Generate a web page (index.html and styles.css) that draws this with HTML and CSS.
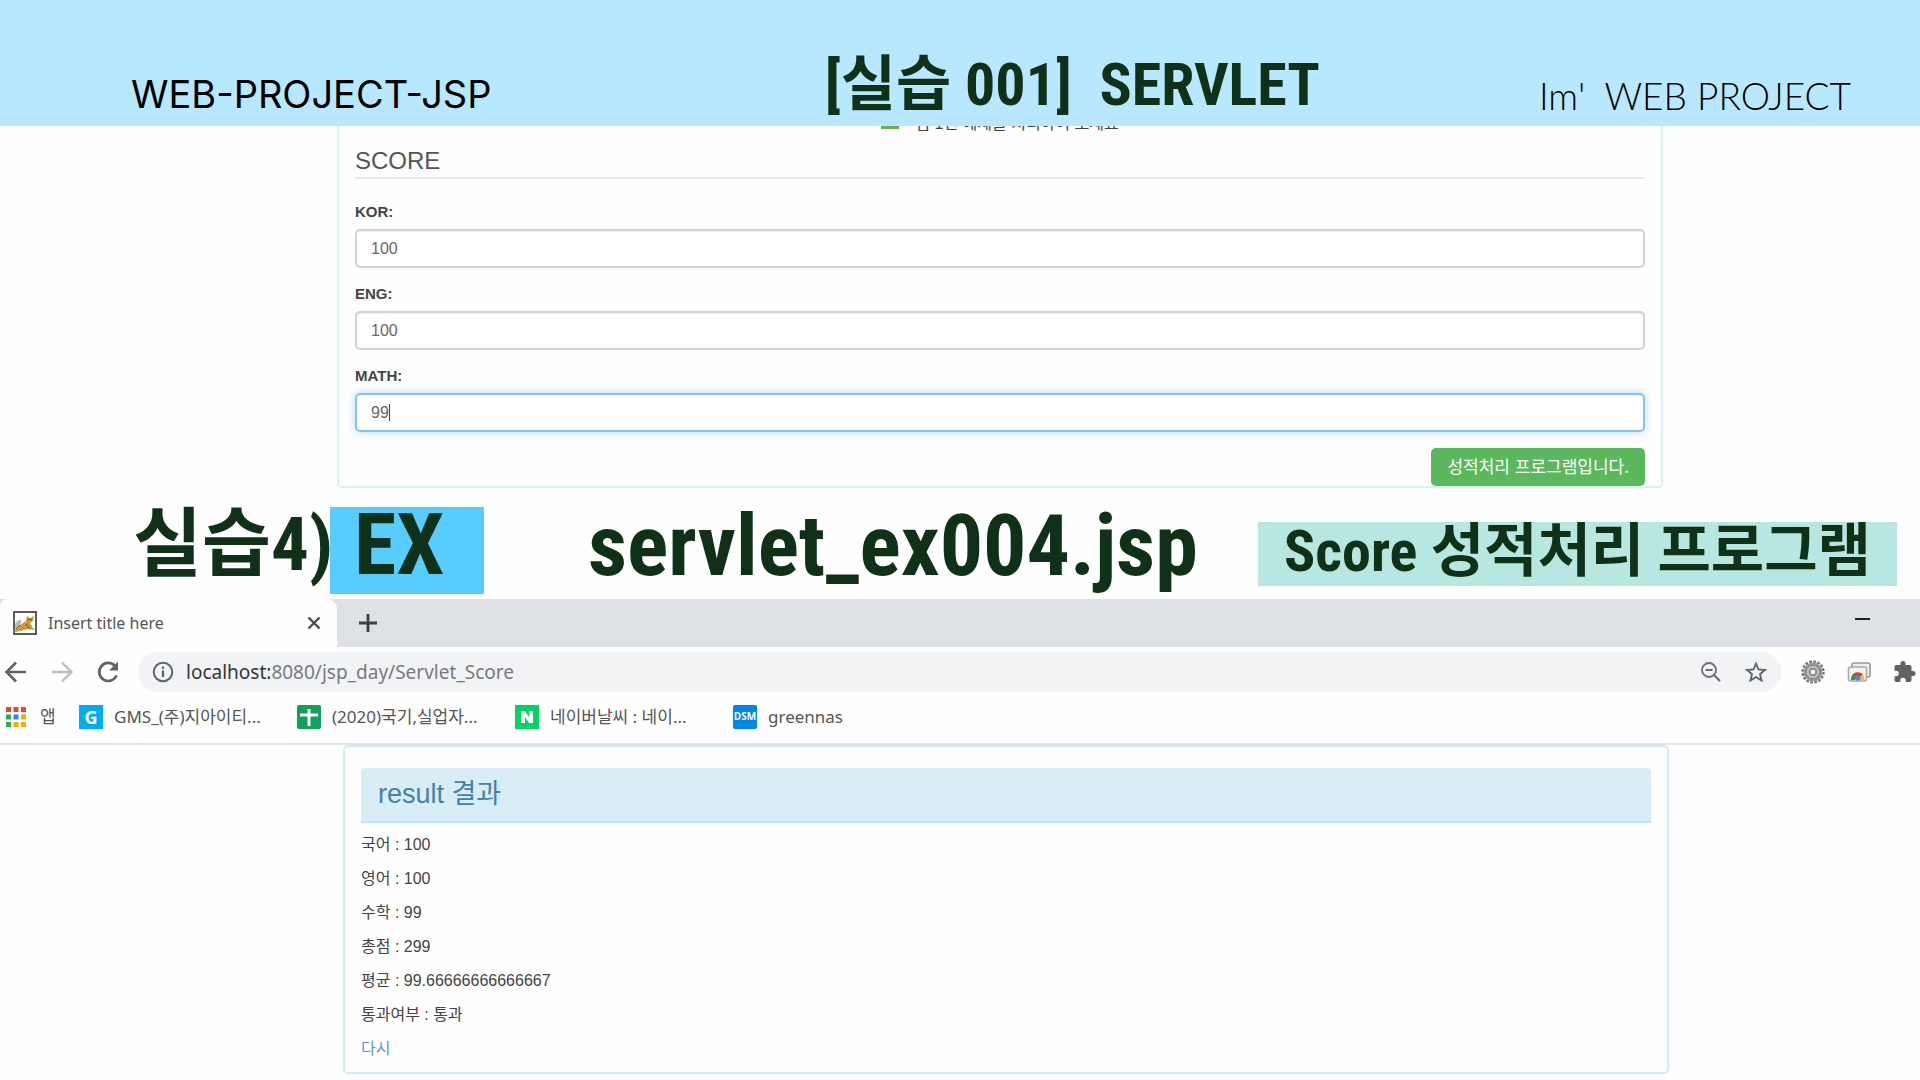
FILE: index.html
```html
<!DOCTYPE html>
<html lang="ko">
<head>
<meta charset="utf-8">
<title>[실습 001] SERVLET</title>
<link rel="stylesheet" href="styles.css">
</head>
<body>
<header class="banner">
  <div class="banner-left">WEB-PROJECT-JSP</div>
  <h1 class="banner-title">[실습 001]&nbsp; SERVLET</h1>
  <div class="banner-right">Im'&nbsp; WEB PROJECT</div>
</header>

<main>
<section class="score-panel">
  <div class="intro"><span class="intro-icon"></span><span>점 1번 예제를 처리하여 보세요</span></div>
  <form class="score-form">
    <h2 class="legend">SCORE</h2>
    <label class="label" for="kor">KOR:</label>
    <input class="field" id="kor" type="text" value="100">
    <label class="label" for="eng">ENG:</label>
    <input class="field" id="eng" type="text" value="100">
    <label class="label" for="math">MATH:</label>
    <div class="field field-active"><input class="bare" id="math" type="text" value="99"><span class="caret"></span></div>
    <button class="submit" type="button">성적처리 프로그램입니다.</button>
  </form>
</section>

<section class="caption">
  <h2 class="caption-num">실습4)</h2>
  <div class="caption-ex">EX</div>
  <div class="caption-file">servlet_ex004.jsp</div>
  <div class="caption-desc">Score 성적처리 프로그램</div>
</section>

<section class="browser">
  <div class="tabs">
    <div class="tab">
      <svg class="i24" viewBox="0 0 24 24"><rect x="1" y="1" width="22" height="22" fill="#fff" stroke="#333" stroke-width="1.6"/><path d="M2 13q3-6 7-3l-3 6-4 2z" fill="#bbb"/><path d="M7 14l6-4 1-5 3 2 4-2-1 5-3 2 3 5 2 2-7-1-4 1-8 2-3-1 5-3z" fill="#c99a3e"/><path d="M3 18l4-4M13 13l4 5M14 8l5 1" stroke="#6b5526" stroke-width="1" fill="none"/></svg>
      <span class="tab-title">Insert title here</span>
      <button class="icon-btn" aria-label="Close tab"><svg class="i16" viewBox="0 0 16 16"><path d="M2.500 2.500l11 11M13.500 2.500l-11 11" stroke="#484c50" stroke-width="2.400"/></svg></button>
    </div>
    <button class="icon-btn new-tab" aria-label="New tab"><svg class="i20" viewBox="0 0 20 20"><path d="M10 1v18M1 10h18" stroke="#3c4043" stroke-width="2.800"/></svg></button>
    <button class="icon-btn minimize" aria-label="Minimize"><svg class="i16" viewBox="0 0 16 16"><path d="M0 8h15" stroke="#222" stroke-width="2"/></svg></button>
  </div>
  <div class="toolbar">
    <button class="icon-btn" aria-label="Back"><svg class="i24" viewBox="0 0 24 24"><path d="M22 12H3M12 2.500L2.500 12l9.500 9.500" fill="none" stroke="#5f6368" stroke-width="2.600"/></svg></button>
    <button class="icon-btn" aria-label="Forward"><svg class="i24" viewBox="0 0 24 24"><path d="M2 12h19M12 2.500l9.500 9.500-9.500 9.500" fill="none" stroke="#bcbec1" stroke-width="2.400"/></svg></button>
    <button class="icon-btn" aria-label="Reload"><svg class="i24" viewBox="0 0 24 24"><path d="M20.500 15.500a9 9 0 1 1-1.700-9.700" fill="none" stroke="#5f6368" stroke-width="2.700"/><path d="M22 1.500v9h-9z" fill="#5f6368"/></svg></button>
    <div class="omnibox">
      <svg class="i22" viewBox="0 0 22 22"><circle cx="11" cy="11" r="9.300" fill="none" stroke="#5f6368" stroke-width="2"/><path d="M11 9.500V16M11 5.500V8" stroke="#5f6368" stroke-width="2.200"/></svg>
      <span class="url"><span class="host">localhost:</span>8080/jsp_day/Servlet_Score</span>
      <svg class="i22" viewBox="0 0 22 22"><circle cx="9" cy="9" r="7" fill="none" stroke="#6b6f73" stroke-width="1.800"/><path d="M5.500 9h7M14 14l6 6" stroke="#6b6f73" stroke-width="2.200"/></svg>
      <svg class="i22" viewBox="0 0 22 22"><path d="M11 2.500l2.500 6 6.500.500-5 4.200 1.600 6.300-5.600-3.400-5.600 3.400L7 13.200 2 9l6.500-.5z" fill="none" stroke="#5f6368" stroke-width="1.800"/></svg>
    </div>
    <div class="extensions">
      <svg class="i24" viewBox="0 0 24 24"><circle cx="12" cy="12" r="10.500" fill="none" stroke="#777" stroke-width="2.400" stroke-dasharray="2.700 1.420"/><circle cx="12" cy="12" r="9.500" fill="#999"/><circle cx="12" cy="12" r="7" fill="#bdbdbd" stroke="#777"/><circle cx="12" cy="12" r="4" fill="#888"/><circle cx="12" cy="12" r="2.300" fill="#fff"/></svg>
      <svg class="i24" viewBox="0 0 24 24"><rect x="5" y="3" width="18" height="14" rx="2" fill="#eee" stroke="#999" stroke-width="1.600"/><rect x="1.500" y="7" width="18" height="14" rx="2" fill="#f5f5f5" stroke="#aaa" stroke-width="1.600"/><path d="M4 20a6.500 6.500 0 0 1 2.500-6l3 3.500L8 20z" fill="#2a9d4a"/><path d="M5.500 14.500a7 7 0 0 1 10.500 0l-3 2.500H8.500z" fill="#e2392c"/><path d="M13 17l3-2.500q2 2.500 1.500 5.500H13z" fill="#f9c522"/><circle cx="10.800" cy="18" r="2.700" fill="#4687f0"/></svg>
      <svg class="i24" viewBox="0 0 24 24"><path d="M20 11h-1.500V7c0-1.100-.9-2-2-2h-4V3.500a2.500 2.500 0 0 0-5 0V5h-4c-1.100 0-2 .9-2 2v3.800H3a2.700 2.700 0 0 1 0 5.400H1.500V20c0 1.100.9 2 2 2h3.800v-1.500a2.700 2.700 0 0 1 5.400 0V22h3.800c1.100 0 2-.9 2-2v-4H20a2.500 2.500 0 0 0 0-5z" fill="#5f6368"/></svg>
    </div>
  </div>
  <nav class="bookmarks">
    <a class="bm bm-apps" href="#"><svg class="i20" viewBox="0 0 20 20"><path d="M0 0h5v5H0zM7.500 0h5v5h-5zM15 0h5v5h-5z" fill="#ea4335"/><path d="M0 7.500h5v5H0zM0 15h5v5H0z" fill="#34a853"/><path d="M7.500 7.500h5v5h-5z" fill="#2684fc"/><path d="M15 7.500h5v5h-5zM7.500 15h5v5h-5zM15 15h5v5h-5z" fill="#f9ab00"/></svg>앱</a>
    <a class="bm bm-wide" href="#"><span class="badge badge-g">G</span>GMS_(주)지아이티...</a>
    <a class="bm bm-wide" href="#"><svg class="i24" viewBox="0 0 24 24"><rect width="24" height="24" rx="2" fill="#149f5b"/><path d="M12 4v17M3 10h18" stroke="#fff" stroke-width="3"/></svg>(2020)국기,실업자...</a>
    <a class="bm bm-wide" href="#"><svg class="i24" viewBox="0 0 24 24"><rect width="24" height="24" fill="#05d265"/><path d="M6 18V6h4l4 6V6h4v12h-4l-4-6v6z" fill="#fff"/></svg>네이버날씨 : 네이...</a>
    <a class="bm" href="#"><span class="badge badge-dsm">DSM</span>greennas</a>
  </nav>
</section>

<section class="result-panel">
  <h2 class="result-title">result 결과</h2>
  <div class="result-lines">
    <p>국어 : 100</p>
    <p>영어 : 100</p>
    <p>수학 : 99</p>
    <p>총점 : 299</p>
    <p>평균 : 99.66666666666667</p>
    <p>통과여부 : 통과</p>
    <p><a class="again" href="#">다시</a></p>
  </div>
</section>
</main>
</body>
</html>
```
FILE: styles.css
```css
* { box-sizing: border-box; }
body {
  margin: 0;
  background: #fefefe;
  color: #444;
  font: 16px/24px "Liberation Sans", "Noto Sans CJK KR", sans-serif;
}
h1, h2, p { margin: 0; font-weight: inherit; }
svg { display: block; flex: none; }
.i16 { width: 16px; height: 16px; }
.i20 { width: 20px; height: 20px; }
.i22 { width: 22px; height: 22px; }
.i24 { width: 24px; height: 24px; }

/* Banner */
.banner {
  display: grid;
  grid-template-columns: 694fr 714fr 381fr;
  align-items: end;
  height: 126px;
  padding-left: 131px;
  background: #b8e8ff;
  color: #000;
  white-space: nowrap;
}
.banner-left { font: 38px/44px "Inter", sans-serif; padding-bottom: 10px; }
.banner-title {
  color: #0e3118;
  font: bold 60px/68px "Roboto Condensed", "Noto Sans CJK KR", sans-serif;
  padding-bottom: 7px;
}
.banner-right { font: 300 37px/44px "Lato", sans-serif; padding-bottom: 8px; }

/* Score form */
.score-panel {
  margin: 0 257px 0 337px;
  padding: 0 16px;
  border: 2px solid #d8f1f6;
  border-top: 0;
  border-radius: 0 0 5px 5px;
}
.intro {
  display: flex;
  justify-content: center;
  align-items: flex-end;
  gap: 16px;
  height: 5px;
  overflow: hidden;
  line-height: 14px;
}
.intro-icon { width: 18px; height: 3px; margin-bottom: 2px; background: #6ab04c; }
.score-form { display: flex; flex-direction: column; }
.legend {
  margin-bottom: 19px;
  padding-top: 14px;
  border-bottom: 2px solid #e8e8e8;
  color: #555;
  font-size: 24px;
  line-height: 32px;
}
.label { margin-bottom: 3px; font-weight: bold; font-size: 15px; line-height: 28px; }
.field {
  height: 39px;
  margin-bottom: 12px;
  padding: 0 14px;
  border: 2px solid #d2d2d2;
  border-radius: 5px;
  background: #fff;
  box-shadow: inset 0 1px 1px #eee;
  color: #666;
  font: 16px/24px "Liberation Sans", sans-serif;
  outline: 0;
}
.field-active {
  display: flex;
  align-items: center;
  border-color: #87c1ee;
  box-shadow: 0 0 10px #b5daf6;
  margin-bottom: 16px;
}
.bare { width: 18px; padding: 0; border: 0; background: none; color: inherit; font: inherit; outline: 0; }
.caret { width: 1px; height: 17px; background: #444; }
.submit {
  align-self: flex-end;
  height: 38px;
  padding: 0 16px 2px;
  border: 0;
  border-radius: 5px;
  background: #5cb85c;
  color: #fff;
  font: 17px/24px "Noto Sans CJK KR", sans-serif;
}

/* Caption row */
.caption {
  display: grid;
  grid-template-columns: 197px 258fr 670fr 639fr;
  align-items: center;
  height: 111px;
  padding: 0 23px 0 133px;
  color: #0e3118;
  font: bold 86px/87px "Roboto Condensed", "Noto Sans CJK KR", sans-serif;
  white-space: nowrap;
}
.caption-num { padding-top: 2px; font-weight: bold; font-size: 75px; }
.caption-ex {
  justify-self: start;
  min-width: 154px;
  height: 87px;
  margin-top: 14px;
  padding-left: 24px;
  background: #58cbff;
  line-height: 76px;
}
.caption-file { padding-top: 4px; }
.caption-desc {
  height: 64px;
  margin-top: 21px;
  background: #b8e6e0;
  font-size: 58px;
  line-height: 58px;
  text-align: center;
}

/* Browser chrome */
.browser { border-bottom: 2px solid #e2e3e6; font-family: "Noto Sans", "Noto Sans CJK KR", sans-serif; }
.icon-btn { display: block; padding: 0; border: 0; background: none; }
.tabs { display: flex; align-items: center; height: 48px; padding-right: 49px; background: #dee1e6; }
.tab {
  display: flex;
  align-items: center;
  width: 337px;
  height: 48px;
  padding: 0 15px 0 13px;
  border-radius: 8px 10px 0 0;
  background: #fefefe;
}
.tab-title { flex: 1; margin-left: 11px; font-size: 16px; color: #555; }
.new-tab { margin-left: 21px; }
.minimize { margin: 0 0 8px auto; }
.toolbar { display: flex; align-items: center; gap: 22px; height: 50px; padding-left: 4px; }
.omnibox {
  display: flex;
  flex: 1;
  align-items: center;
  gap: 23px;
  height: 40px;
  padding: 0 14px;
  margin-left: -4px;
  border-radius: 20px;
  background: #f1f3f4;
}
.url { flex: 1; margin-left: -11px; color: #777b80; font-size: 19px; }
.host { color: #33363a; }
.extensions { display: flex; gap: 22px; padding-right: 3px; margin-left: -2px; }
.bookmarks { display: flex; align-items: center; height: 46px; padding: 0 6px 6px; white-space: nowrap; }
.bm { display: flex; align-items: center; gap: 11px; color: #555; text-decoration: none; font-size: 17px; }
.bm-apps { width: 73px; gap: 14px; }
.bm-wide { width: 218px; }
.badge { width: 24px; height: 24px; color: #fff; font: bold 18px/24px "Open Sans", sans-serif; text-align: center; }
.badge-g { background: #00aeef; }
.badge-dsm { border-radius: 2px; background: #0086e5; font-size: 10px; line-height: 22px; }

/* Result */
.result-panel {
  margin: 0 251px 0 343px;
  padding: 21px 16px 6px;
  border: 2px solid #cdeef7;
  border-radius: 5px;
}
.result-title {
  height: 55px;
  padding-left: 17px;
  border-bottom: 2px solid #bce8f1;
  border-radius: 4px 4px 0 0;
  background: #d9edf7;
  color: #4682a3;
  font-size: 27px;
  line-height: 52px;
}
.result-lines { padding-top: 5px; line-height: 34px; }
.again { color: #5c98cc; text-decoration: none; }
```
